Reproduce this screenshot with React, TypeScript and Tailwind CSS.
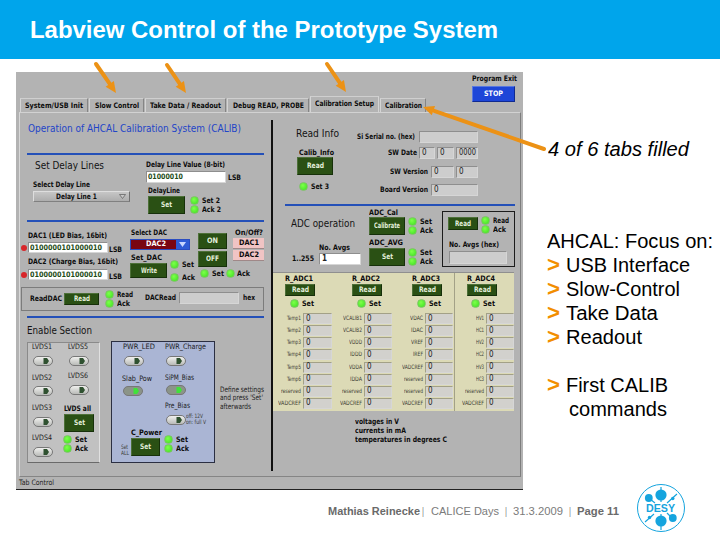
import { useLayoutEffect, useRef, useState } from 'react';
import type { ReactNode } from 'react';
import clsx from 'clsx';

type LabelProps = {
  w: number;
  children: string;
  className?: string;
};

// Single line of text squeezed or stretched to a fixed width
function Fit({ w, children, className }: LabelProps) {
  const ref = useRef<HTMLSpanElement>(null);
  const [scale, setScale] = useState(1);

  useLayoutEffect(() => {
    if (ref.current && ref.current.offsetWidth > 0) {
      const range = document.createRange();
      range.selectNodeContents(ref.current);
      setScale(w / (range.getBoundingClientRect().width / scale));
    }
  }, [w, children]);

  return (
    <div className={clsx('shrink-0 whitespace-pre', className)} style={{ width: w }}>
      <span ref={ref} className="inline-block origin-left align-top" style={{ transform: `scaleX(${scale})` }}>
        {children}
      </span>
    </div>
  );
}

function Label({ w, children, className }: LabelProps) {
  return (
    <Fit w={w} className={clsx('h-2 text-[7.5px] leading-[8px] font-bold text-[#0c0c0c]', className)}>
      {children}
    </Fit>
  );
}

function Thin({ w, children, className }: LabelProps) {
  return (
    <Fit w={w} className={clsx('h-2 text-[7.5px] leading-[8px] text-[#1c1c1c]', className)}>
      {children}
    </Fit>
  );
}

function Tiny({ w, children, className }: LabelProps) {
  return (
    <Fit w={w} className={clsx('h-1.5 text-[6px] leading-[6px] text-[#3c3c34]', className)}>
      {children}
    </Fit>
  );
}

function Heading({ w, children, className }: LabelProps) {
  return (
    <Fit w={w} className={clsx('h-3 text-[11px] leading-[12px] text-[#141414]', className)}>
      {children}
    </Fit>
  );
}

function Rule({ className }: { className?: string }) {
  return <div className={clsx('shrink-0 bg-[#2450b8]', className)} />;
}

function Button({ w, children, className }: LabelProps) {
  return (
    <button
      type="button"
      className={clsx(
        'flex shrink-0 items-center justify-center border border-t-[#4d7038] border-l-[#4d7038] border-r-[#16300a] border-b-[#16300a] bg-[#2a5014]',
        className,
      )}
    >
      <Fit w={w} className="h-2 text-left text-[7.5px] leading-[8px] font-bold text-[#e4efdc]">
        {children}
      </Fit>
    </button>
  );
}

function Led({ className }: { className?: string }) {
  return (
    <div
      className={clsx(
        'size-[9px] shrink-0 rounded-full border border-[#7cc465] bg-radial-[at_40%_35%] from-[#7dff4a] to-[#3be01f]',
        className,
      )}
    />
  );
}

function RedLed() {
  return <div className="ml-px size-1.5 shrink-0 rounded-full bg-[#d8262a]" />;
}

function LedLabel({ w, children, className }: LabelProps) {
  return (
    <div className={clsx('flex h-[9px] items-center gap-[2.5px]', className)}>
      <Led />
      <Label w={w}>{children}</Label>
    </div>
  );
}

function SetAck({ className }: { className?: string }) {
  return (
    <div className={className}>
      <LedLabel w={12}>Set</LedLabel>
      <LedLabel w={13}>Ack</LedLabel>
    </div>
  );
}

function ReadAck({ className }: { className?: string }) {
  return (
    <div className={clsx('shrink-0', className)}>
      <LedLabel w={16} className="h-[7px]">Read</LedLabel>
      <LedLabel w={13} className="h-[7px]">Ack</LedLabel>
    </div>
  );
}

function Field({ className, children }: { className?: string; children?: ReactNode }) {
  return (
    <div
      className={clsx(
        'flex shrink-0 items-center border border-t-[#8e8e8e] border-l-[#8e8e8e] border-r-[#d6d6d6] border-b-[#d6d6d6] bg-[#cdcdcd] pl-0.5 text-[8px] leading-[8px] text-[#222]',
        className,
      )}
    >
      {children}
    </div>
  );
}

function BitField({ w, children, className }: LabelProps) {
  return (
    <Field className={clsx('w-20 bg-white pl-px', className)}>
      <Fit w={w} className="h-2 text-[7.5px] leading-[8px] font-bold text-[#234d16]">
        {children}
      </Fit>
    </Field>
  );
}

function Toggle({ on, className }: { on?: boolean; className?: string }) {
  return (
    <div
      className={clsx(
        'flex h-[10px] w-5 shrink-0 items-center justify-end rounded-full border border-[#777] pr-[3px]',
        on ? 'bg-[#8b9488]' : 'bg-linear-to-b from-[#f0f0ee] to-[#b9bbb8]',
        className,
      )}
    >
      <svg className="h-1.5 w-1.5" viewBox="0 0 6 6">
        <path d="M0.5 0H4L6 3L4 6H0.5Z" fill={on ? '#3fe23a' : '#2f5130'} />
      </svg>
    </div>
  );
}

const adcColumns = [
  { name: 'R_ADC1', col: 'w-[60px]', indent: 'ml-3', led: 'ml-[17px]', pad: 'pr-px', field: 'w-[29px]',
    rows: [['Temp1', 14], ['Temp2', 14], ['Temp3', 14], ['Temp4', 14], ['Temp5', 14], ['Temp6', 14], ['reserved', 20], ['VADCREF', 23]] },
  { name: 'R_ADC2', col: 'w-[61px]', indent: 'ml-[19px]', led: 'ml-6', pad: 'pr-0.5', field: 'w-7',
    rows: [['VCALIB1', 19], ['VCALIB2', 19], ['VDDD', 13], ['IDDD', 12], ['VDDA', 13], ['IDDA', 12], ['reserved', 20], ['VADCREF', 22]] },
  { name: 'R_ADC3', col: 'w-[60px]', indent: 'ml-[18px]', led: 'ml-[23px]', pad: 'pr-px', field: 'w-7',
    rows: [['VDAC', 13], ['IDAC', 12], ['VREF', 12], ['IREF', 10], ['VADCREF', 21], ['reserved', 19], ['reserved', 19], ['VADCREF', 21]] },
  { name: 'R_ADC4', col: 'w-[60px] border-l border-[#a3a187]', indent: 'ml-3', led: 'ml-4', pad: 'pr-0', field: 'w-7',
    rows: [['HV1', 8], ['HC1', 8], ['HV2', 8], ['HC2', 8], ['HV3', 8], ['HC3', 8], ['reserved', 19], ['VADCREF', 22]] },
] as const;

function AdcTable() {
  return (
    <div className="flex h-[139px] w-[241px] shrink-0 border-t border-[#8f8f8f] bg-[#dcdab6]">
      {adcColumns.map((c) => (
        <div key={c.name} className={clsx('flex shrink-0 flex-col', c.col)}>
          <Label w={28} className={clsx('mt-0.5', c.indent)}>{c.name}</Label>
          <Button w={17} className={clsx('mt-px h-3 w-[30px]', c.indent)}>Read</Button>
          <LedLabel w={12} className={clsx('mt-[3px]', c.led)}>Set</LedLabel>
          <div className="mt-[5px]">
            {c.rows.map(([label, w], i) => (
              <div key={i} className={clsx('flex h-[12.15px] items-start justify-end gap-[2px]', c.pad)}>
                <Tiny w={w} className="mt-0.5">{label}</Tiny>
                <Field className={clsx('h-[11px] border-t-[#a3a187] border-l-[#a3a187] bg-[#d2d1cd]', c.field)}>0</Field>
              </div>
            ))}
          </div>
        </div>
      ))}
    </div>
  );
}

const tabs = [
  { text: 'System/USB Init', w: 58, box: 'w-[68px] h-[14px]' },
  { text: 'Slow Control', w: 44, box: 'w-[55px] h-[14px]' },
  { text: 'Take Data / Readout', w: 71, box: 'w-[81px] h-[14px]' },
  { text: 'Debug READ, PROBE', w: 71, box: 'w-[82px] h-[14px]' },
  { text: 'Calibration Setup', w: 59, box: 'w-[69px] h-4 border-r-[#d4d4d4] pb-px' },
  { text: 'Calibration', w: 37, box: 'w-[46px] h-[14px]' },
];

function TopBar() {
  return (
    <div className="flex h-10 shrink-0 items-end pl-1">
      <div className="flex items-end gap-px">
        {tabs.map((t) => (
          <div
            key={t.text}
            className={clsx(
              'flex items-center justify-center border-t border-r border-l border-t-[#cfcfcf] border-l-[#d4d4d4] border-r-[#858585]',
              t.box,
            )}
          >
            <Label w={t.w}>{t.text}</Label>
          </div>
        ))}
      </div>
      <div className="mt-[3px] ml-[46px] self-start">
        <Label w={45}>Program Exit</Label>
        <button
          type="button"
          className="mt-[3px] flex h-4 w-[43px] items-center justify-center border border-t-[#5878e0] border-l-[#5878e0] border-r-[#102a90] border-b-[#102a90] bg-[#1d46d8]"
        >
          <Label w={19} className="text-left text-white!">STOP</Label>
        </button>
      </div>
    </div>
  );
}

function DelaySection() {
  return (
    <div className="flex h-[65px] shrink-0">
      <div className="w-[126px] shrink-0">
        <Heading w={69} className="mt-[5px] ml-[15px]">Set Delay Lines</Heading>
        <Label w={57} className="mt-[9px] ml-[13px]">Select Delay Line</Label>
        <div className="mt-0.5 ml-[13px] flex h-[11px] w-[97px] items-center border border-t-[#dedede] border-l-[#dedede] border-r-[#707070] border-b-[#808080] bg-linear-to-b from-[#c6c6c6] to-[#adadad] pl-[22px]">
          <Label w={41}>Delay Line 1</Label>
          <svg className="ml-[22px] h-[5px] w-[7px]" viewBox="0 0 7 5">
            <path d="M0.5 0.5H6.5L3.5 4.5Z" fill="#c8c8c8" stroke="#666" strokeWidth="0.8" />
          </svg>
        </div>
      </div>
      <div>
        <Label w={79} className="mt-[6px]">Delay Line Value (8-bit)</Label>
        <div className="mt-0.5 flex h-3">
          <BitField w={35} className="h-3">01000010</BitField>
          <Label w={13} className="mt-[3px] ml-0.5">LSB</Label>
        </div>
        <Label w={32} className="mt-1 ml-0.5">DelayLine</Label>
        <div className="mt-px ml-0.5 flex">
          <Button w={11} className="h-[18px] w-[37px]">Set</Button>
          <div className="ml-[5px]">
            <LedLabel w={18}>Set 2</LedLabel>
            <LedLabel w={19}>Ack 2</LedLabel>
          </div>
        </div>
      </div>
    </div>
  );
}

function DacSection() {
  return (
    <div className="flex h-[65px] shrink-0">
      <div className="w-[110px] shrink-0">
        <Label w={79} className="mt-[10px] ml-2">DAC1 (LED Bias, 16bit)</Label>
        <div className="mt-0.5 flex h-[11px] items-center gap-px">
          <RedLed />
          <BitField w={72} className="h-[11px]">0100000101000010</BitField>
          <Label w={13} className="mt-1">LSB</Label>
        </div>
        <Label w={90} className="mt-[5px] ml-2">DAC2 (Charge Bias, 16bit)</Label>
        <div className="mt-[3px] flex h-[11px] items-center gap-px">
          <RedLed />
          <BitField w={72} className="h-[11px]">0100000101000010</BitField>
          <Label w={13} className="mt-1">LSB</Label>
        </div>
      </div>
      <div className="w-[68px] shrink-0">
        <Label w={36} className="mt-[7px] ml-px">Select DAC</Label>
        <div className="mt-0.5 flex h-[11px] w-[60px] border border-[#2a4cc0] bg-[#7a0512]">
          <Label w={20} className="ml-[15px] text-white!">DAC2</Label>
          <div className="ml-auto flex w-[13px] items-center justify-center bg-[#2f5bd6]">
            <svg className="h-[5px] w-[7px]" viewBox="0 0 7 5">
              <path d="M0 0H7L3.5 5Z" fill="#c9d6ff" />
            </svg>
          </div>
        </div>
        <Label w={31} className="mt-1 ml-px">Set_DAC</Label>
        <div className="mt-px flex">
          <Button w={16} className="h-[15px] w-[37px]">Write</Button>
          <div className="-mt-[3px] ml-[3px] flex flex-col gap-1">
            <LedLabel w={12}>Set</LedLabel>
            <LedLabel w={13}>Ack</LedLabel>
          </div>
        </div>
      </div>
      <div>
        <div className="flex h-[45px]">
          <div className="mt-[11px] flex flex-col gap-0.5">
            <Button w={11} className="h-4 w-[29px]">ON</Button>
            <Button w={13} className="h-4 w-[29px]">OFF</Button>
          </div>
          <div className="mt-[7px] ml-[6px]">
            <Label w={28} className="ml-0.5">On/Off?</Label>
            {['DAC1', 'DAC2'].map((d) => (
              <div key={d} className="mt-px flex h-[11px] w-[31px] items-center justify-center border-b border-[#a08888] bg-[#f0c4c4]">
                <Label w={20}>{d}</Label>
              </div>
            ))}
          </div>
        </div>
        <div className="mt-0.5 ml-0.5 flex gap-[2px]">
          <LedLabel w={12}>Set</LedLabel>
          <LedLabel w={13}>Ack</LedLabel>
        </div>
      </div>
    </div>
  );
}

function ReadDacBox() {
  return (
    <div className="ml-px flex h-6 w-[243px] shrink-0 items-center border border-[#7c7c7c] pl-2">
      <Label w={32}>ReadDAC</Label>
      <Button w={16} className="ml-0.5 h-3 w-[35px]">Read</Button>
      <ReadAck className="ml-[6px]" />
      <Label w={31} className="mb-0.5 ml-3">DACRead</Label>
      <Field className="mb-0.5 ml-[3px] h-3 w-[60px]" />
      <Label w={12} className="mb-0.5 ml-1">hex</Label>
    </div>
  );
}

function EnableSection() {
  return (
    <div className="mt-1 flex shrink-0">
      <div className="mt-px ml-[7px] flex h-[121px] w-[73px] shrink-0 border border-t-[#8a8a8a] border-l-[#8a8a8a] border-r-[#e0e0e0] border-b-[#6a6a6a] bg-[#c1c1c1]">
        <div className="w-9 shrink-0 pl-1">
          <Thin w={20}>LVDS1</Thin>
          <Toggle className="mt-[5px] ml-px" />
          <Thin w={20} className="mt-2">LVDS2</Thin>
          <Toggle className="mt-1 ml-px" />
          <Thin w={20} className="mt-2">LVDS3</Thin>
          <Toggle className="mt-[5px] ml-px" />
          <Thin w={20} className="mt-[7px]">LVDS4</Thin>
          <Toggle className="mt-[5px] ml-px" />
        </div>
        <div>
          <Thin w={20} className="ml-1">LVDS5</Thin>
          <Toggle className="mt-[5px] ml-[5px]" />
          <Thin w={20} className="mt-[6px] ml-1">LVDS6</Thin>
          <Toggle className="mt-[5px] ml-[5px]" />
          <Label w={27} className="mt-[10px]">LVDS all</Label>
          <Button w={11} className="mt-px h-[18px] w-[30px]">Set</Button>
          <SetAck className="mt-[3px] -ml-px" />
        </div>
      </div>
      <div className="ml-[11px] flex h-[122px] w-[104px] shrink-0 border border-[#2b2f42] bg-[#aab5d4]">
        <div className="w-[52px] shrink-0">
          <Thin w={32} className="mt-px ml-[11px]">PWR_LED</Thin>
          <Toggle className="mt-[5px] ml-3" />
          <Thin w={30} className="mt-[9px] ml-[10px]">Slab_Pow</Thin>
          <Toggle on className="mt-[3px] ml-[11px]" />
          <Label w={31} className="mt-[33px] ml-[19px]">C_Power</Label>
          <div className="mt-px ml-[9px] flex gap-[2px]">
            <div className="pt-1.5">
              <Tiny w={7}>Set</Tiny>
              <Tiny w={8}>ALL</Tiny>
            </div>
            <Button w={11} className="h-[18px] w-[29px]">Set</Button>
          </div>
        </div>
        <div>
          <Thin w={41} className="mt-px ml-px">PWR_Charge</Thin>
          <Toggle className="mt-[5px] ml-0.5" />
          <Thin w={29} className="mt-2 ml-px">SiPM_Bias</Thin>
          <Toggle on className="mt-[3px] ml-0.5" />
          <Thin w={25} className="mt-[7px] ml-px">Pre_Bias</Thin>
          <div className="mt-[5px] ml-0.5 flex h-[10px]">
            <Toggle />
            <div className="-mt-0.5">
              <Tiny w={17}>off: 12V</Tiny>
              <Tiny w={20}>on: full V</Tiny>
            </div>
          </div>
          <SetAck className="mt-[10px]" />
        </div>
      </div>
      <div className="mt-[45px] ml-[5px] flex flex-col">
        <Thin w={44}>Define settings</Thin>
        <Thin w={43}>and press 'Set'</Thin>
        <Thin w={31} className="mt-px">afterwards</Thin>
      </div>
    </div>
  );
}

function ReadInfo() {
  return (
    <div className="flex h-[91px] shrink-0">
      <div className="w-[84px] shrink-0">
        <Heading w={43} className="mt-[15px] ml-[23px]">Read Info</Heading>
        <Label w={35} className="mt-[9px] ml-[26px]">Calib_Info</Label>
        <Button w={17} className="ml-6 h-[18px] w-9">Read</Button>
        <LedLabel w={18} className="mt-[7px] ml-[26px]">Set 3</LedLabel>
      </div>
      <div className="flex w-[121px] shrink-0 flex-col items-end pt-[18px]">
        <div className="flex items-center">
          <Label w={58}>Si Serial no. (hex)</Label>
          <Field className="ml-1 h-3 w-[59px]" />
        </div>
        <div className="mt-1 flex items-center gap-0.5">
          <Label w={29}>SW Date</Label>
          <Field className="h-3 w-4">0</Field>
          <Field className="h-3 w-[17px]">0</Field>
          <Field className="h-3 w-[22px]">
            <Fit w={17}>0000</Fit>
          </Field>
        </div>
        <div className="mt-[7px] flex items-center gap-0.5">
          <Label w={38} className="mr-px">SW Version</Label>
          <Field className="h-3 w-[23px]">0</Field>
          <Field className="h-3 w-[22px]">0</Field>
        </div>
        <div className="mt-[6px] flex items-center">
          <Label w={48}>Board Version</Label>
          <Field className="ml-[3px] h-3 w-[47px]">0</Field>
        </div>
      </div>
    </div>
  );
}

function AdcOperation() {
  return (
    <div className="flex h-[66px] shrink-0">
      <div className="w-24 shrink-0">
        <Heading w={64} className="mt-3 ml-[18px]">ADC operation</Heading>
        <Label w={31} className="mt-[14px] ml-[46px]">No. Avgs</Label>
        <div className="mt-px ml-[19px] flex items-center">
          <Label w={22}>1..255</Label>
          <Field className="ml-[5px] h-3 w-[42px] bg-white font-bold">1</Field>
        </div>
      </div>
      <div className="w-[73px] shrink-0">
        <Label w={29} className="mt-[3px]">ADC_Cal</Label>
        <div className="flex">
          <Button w={26} className="h-[18px] w-9">Calibrate</Button>
          <SetAck className="ml-[3px]" />
        </div>
        <Label w={34} className="mt-1">ADC_AVG</Label>
        <div className="mt-px flex">
          <Button w={11} className="h-[18px] w-9">Set</Button>
          <SetAck className="ml-[3px]" />
        </div>
      </div>
      <div className="mt-[5px] h-14 w-[73px] shrink-0 border border-[#1c1c1c]">
        <div className="mt-[5px] ml-[5px] flex">
          <Button w={16} className="h-[13px] w-[30px]">Read</Button>
          <ReadAck className="-mt-px ml-[3px]" />
        </div>
        <Label w={50} className="mt-[7px] ml-[6px]">No. Avgs (hex)</Label>
        <Field className="mt-0.5 ml-[6px] h-[13px] w-[58px]" />
      </div>
    </div>
  );
}

function LabviewPanel() {
  return (
    <div className="flex h-[418px] w-[507px] shrink-0 flex-col border-b border-[#222] bg-[#b3b3b3] font-['DejaVu_Sans_Condensed','DejaVu_Sans',sans-serif]">
      <TopBar />
      <div className="ml-[3px] flex h-[365px] w-[502px] shrink-0 border border-t-[#d2d2d2] border-r-[#7d7d7d] border-b-[#858585] border-l-[#d8d8d8]">
        <div className="flex w-[251px] shrink-0 flex-col">
          <Fit w={213} className="mt-[10px] ml-2 h-3 text-[10px] leading-[12px] text-[#1f45c8]">
            Operation of AHCAL Calibration System (CALIB)
          </Fit>
          <Rule className="mt-[18px] ml-[7px] h-0.5 w-[237px]" />
          <DelaySection />
          <Rule className="ml-[7px] h-0.5 w-[237px]" />
          <DacSection />
          <ReadDacBox />
          <Rule className="mt-[5px] ml-[7px] h-0.5 w-[237px]" />
          <Heading w={65} className="mt-[7px] ml-[7px]">Enable Section</Heading>
          <EnableSection />
        </div>
        <div className="mt-[7px] h-[351px] w-0.5 shrink-0 bg-[#111]" />
        <div className="flex flex-col">
          <ReadInfo />
          <Rule className="ml-3 h-0.5 w-[230px]" />
          <AdcOperation />
          <AdcTable />
          <div className="mt-[7px] ml-[82px]">
            <Label w={44}>voltages in V</Label>
            <Label w={51} className="mt-px">currents in mA</Label>
            <Label w={92} className="mt-px">temperatures in degrees C</Label>
          </div>
        </div>
      </div>
      <Thin w={35} className="mt-0.5 ml-[3px]">Tab Control</Thin>
    </div>
  );
}

const bullets = [
  { text: 'USB Interface', w: 124 },
  { text: 'Slow-Control', w: 114 },
  { text: 'Take Data', w: 92 },
  { text: 'Readout', w: 76 },
];

function Bullet({ text, w }: { text: string; w: number }) {
  return (
    <li className="flex h-6">
      <Fit w={13} className="mr-[6px] text-[22px] font-bold text-[#f28e00]">{'>'}</Fit>
      <Fit w={w}>{text}</Fit>
    </li>
  );
}

function Notes() {
  return (
    <div className="pt-[65px] pl-6 text-[19.5px] leading-[24px] text-black">
      <Fit w={141} className="ml-px h-6 italic">4 of 6 tabs filled</Fit>
      <Fit w={166} className="mt-[68px] h-6 underline decoration-1 underline-offset-2">AHCAL: Focus on:</Fit>
      <ul>
        {bullets.map((b) => (
          <Bullet key={b.text} text={b.text} w={b.w} />
        ))}
      </ul>
      <ul className="mt-6">
        <Bullet text="First CALIB" w={102} />
      </ul>
      <Fit w={98} className="ml-[22px] h-6">commands</Fit>
    </div>
  );
}

const arrows = [
  [96, 64, 116, 93],
  [167, 65, 186, 93],
  [327, 64, 346, 92],
  [544, 149, 423, 107],
];

function Arrows() {
  return (
    <svg className="pointer-events-none absolute inset-0 h-[540px] w-[720px]" viewBox="0 0 720 540">
      {arrows.map(([x1, y1, x2, y2], i) => {
        const len = Math.hypot(x2 - x1, y2 - y1);
        const ux = (x2 - x1) / len;
        const uy = (y2 - y1) / len;
        const bx = x2 - ux * 11;
        const by = y2 - uy * 11;
        return (
          <g key={i} fill="#ec9216" stroke="#ec9216">
            <line x1={x1} y1={y1} x2={bx} y2={by} strokeWidth="4" strokeLinecap="round" />
            <polygon
              stroke="none"
              points={`${x2},${y2} ${bx - uy * 5},${by + ux * 5} ${bx + uy * 5},${by - ux * 5}`}
            />
          </g>
        );
      })}
    </svg>
  );
}

function DesyLogo() {
  return (
    <svg className="size-[50px] shrink-0" viewBox="0 0 50 50">
      <circle cx="25" cy="25" r="23.5" fill="white" stroke="#15a4de" strokeWidth="1" />
      <g stroke="#15a4de" strokeWidth="1.2">
        <path d="M25 4V19M25 31V47M14 16L19 20M31 20L41 11M9 39L18 31M31 30L36 35" fill="none" />
      </g>
      <g fill="#15a4de">
        <circle cx="25" cy="12" r="5.6" />
        <circle cx="25" cy="38" r="5.6" />
        <circle cx="12.8" cy="15" r="3.9" />
        <circle cx="36.8" cy="35" r="3.9" />
        <circle cx="36.8" cy="15.5" r="1.7" />
        <circle cx="13.5" cy="34.5" r="1.7" />
      </g>
      <text x="10" y="29.2" textLength="29" lengthAdjust="spacingAndGlyphs" fontSize="11.5" fontWeight="bold" fill="#15a4de">
        DESY
      </text>
    </svg>
  );
}

function Footer() {
  return (
    <footer className="flex h-[50px] shrink-0 items-center pl-[328px] text-[11px] leading-[12px] text-[#7b7b7b]">
      <div className="flex pt-[5px]">
        <Fit w={92} className="font-bold text-[#6a6a6a]">Mathias Reinecke</Fit>
        <Fit w={2} className="ml-0.5">|</Fit>
        <Fit w={68} className="ml-[7px]">CALICE Days</Fit>
        <Fit w={2} className="ml-[6px]">|</Fit>
        <Fit w={50} className="ml-[6px]">31.3.2009</Fit>
        <Fit w={2} className="ml-[6px]">|</Fit>
        <Fit w={42} className="ml-[6px] font-bold text-[#6a6a6a]">Page 11</Fit>
      </div>
      <div className="ml-[17px]">
        <DesyLogo />
      </div>
    </footer>
  );
}

export default function App() {
  return (
    <main className="relative flex h-[540px] w-[720px] flex-col overflow-hidden bg-white font-['Liberation_Sans',Arial,sans-serif]">
      <header className="h-[59px] shrink-0 bg-[#00a5eb] pt-4 pl-[30px]">
        <h1>
          <Fit w={468} className="h-7 text-[23px] leading-[28px] font-bold text-white">
            Labview Control of the Prototype System
          </Fit>
        </h1>
      </header>
      <div className="flex h-[424px] shrink-0 pt-[13px] pl-4">
        <LabviewPanel />
        <Notes />
      </div>
      <Footer />
      <Arrows />
    </main>
  );
}
